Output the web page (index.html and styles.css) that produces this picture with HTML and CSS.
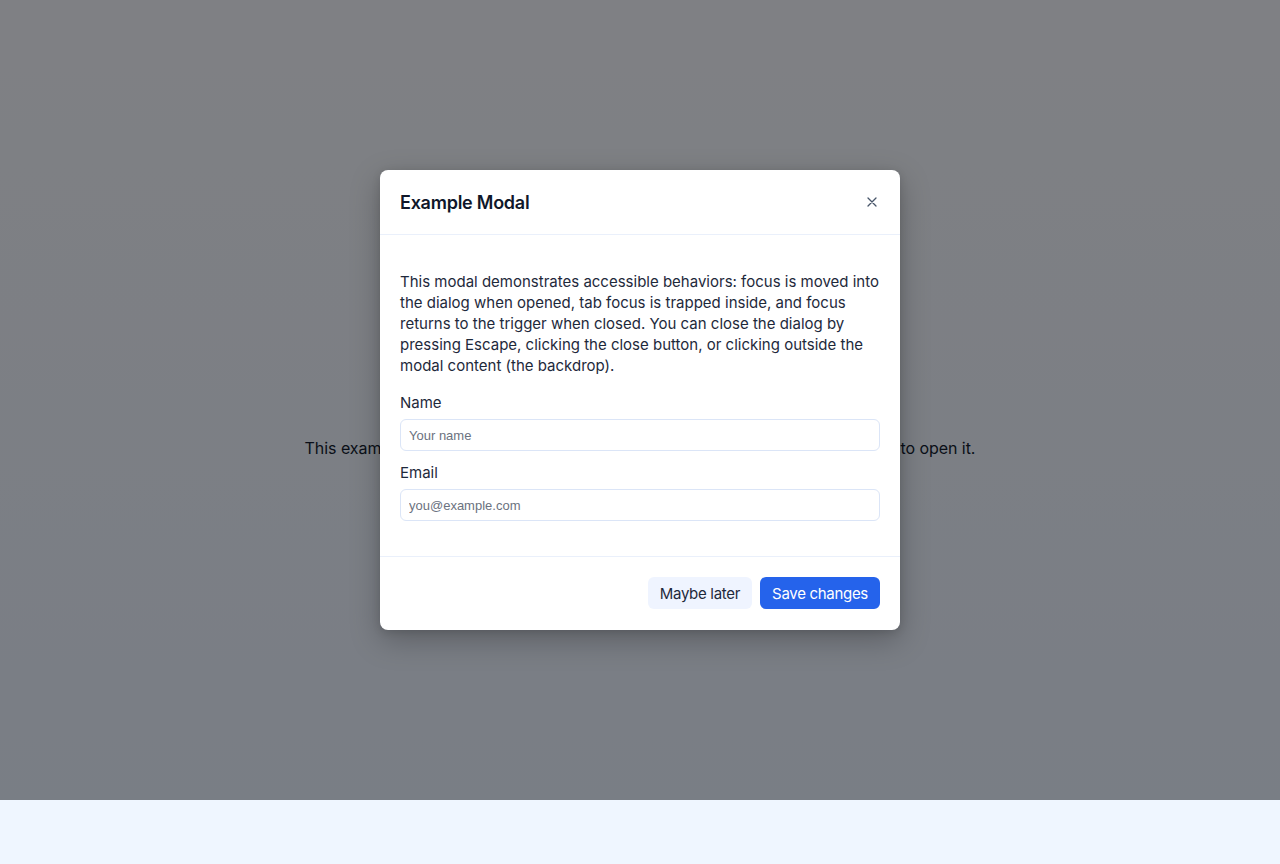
FILE: index.html
```html
<!DOCTYPE html>
<html lang="en">
<head>
<meta charset="utf-8">
<title>Accessible Modal</title>
<link rel="stylesheet" href="styles.css">
</head>
<body>
<main class="page">
  <p class="intro">This example demonstrates an accessible modal dialog. Click the button below to open it.</p>
</main>
<div class="backdrop">
  <div class="modal" role="dialog" aria-modal="true" aria-labelledby="modal-title">
    <header class="modal-header">
      <h2 id="modal-title" class="modal-title">Example Modal</h2>
      <button class="close-btn" aria-label="Close">
        <svg width="10" height="10" viewBox="0 0 10 10" aria-hidden="true"><path d="M1 1L9 9M9 1L1 9" stroke="#475569" stroke-width="1.3" stroke-linecap="round"/></svg>
      </button>
    </header>
    <div class="modal-body">
      <p class="modal-text">This modal demonstrates accessible behaviors: focus is moved into the dialog when opened, tab focus is trapped inside, and focus returns to the trigger when closed. You can close the dialog by pressing Escape, clicking the close button, or clicking outside the modal content (the backdrop).</p>
      <div class="field">
        <label class="label" for="name">Name</label>
        <input class="input" id="name" type="text" placeholder="Your name">
      </div>
      <div class="field last">
        <label class="label" for="email">Email</label>
        <input class="input" id="email" type="email" placeholder="you@example.com">
      </div>
    </div>
    <footer class="modal-footer">
      <button class="btn btn-secondary">Maybe later</button>
      <button class="btn btn-primary">Save changes</button>
    </footer>
  </div>
</div>
</body>
</html>
```

FILE: styles.css
```css
* { box-sizing: border-box; }
html, body { margin: 0; padding: 0; }
body {
  font-family: Inter, "Noto Sans", "Liberation Sans", sans-serif;
  background: #eff6ff;
  min-height: 864px;
}
.page {
  height: 800px;
  padding-top: 436px;
  background: linear-gradient(180deg, #fbfbfc 0%, #eff6ff 100%);
  display: flex;
  justify-content: center;
}
.intro {
  margin: 0;
  height: 24px;
  font-size: 16px;
  line-height: 24px;
  color: #111827;
  text-align: center;
  letter-spacing: -0.05px;
}
.backdrop {
  position: absolute;
  top: 0;
  left: 0;
  width: 100%;
  height: 800px;
  background: rgba(3, 6, 12, 0.5);
  display: flex;
  align-items: center;
  justify-content: center;
}
.modal {
  width: 520px;
  background: #ffffff;
  border-radius: 8px;
  box-shadow: 0 10px 30px rgba(0, 0, 0, 0.25), 0 2px 8px rgba(0, 0, 0, 0.12);
  color: #1e293b;
}
.modal-header {
  height: 65px;
  display: flex;
  align-items: center;
  justify-content: space-between;
  padding: 0 20px;
  border-bottom: 1px solid #eaf0fb;
}
.modal-title {
  margin: 0;
  font-size: 18px;
  font-weight: 600;
  color: #0f172a;
  letter-spacing: -0.25px;
}
.close-btn {
  width: 24px;
  height: 24px;
  margin-right: -4px;
  padding: 0;
  border: 0;
  background: transparent;
  display: flex;
  align-items: center;
  justify-content: center;
}
.modal-body {
  padding: 20px 20px 20px;
  border-bottom: 1px solid #eaf0fb;
}
.modal-text {
  margin: 16px 0;
  font-size: 15px;
  line-height: 21px;
  color: #1e293b;
}
.field { margin-bottom: 11px; }
.field.last { margin-bottom: 15px; }
.label {
  display: block;
  font-size: 15px;
  line-height: 21px;
  margin-bottom: 6px;
  color: #1e293b;
}
.input {
  display: block;
  width: 100%;
  height: 32px;
  padding: 0 8px;
  border: 1px solid #dbe5f7;
  border-radius: 6px;
  font-family: "Liberation Sans", Arial, sans-serif;
  font-size: 13px;
  color: #1e293b;
  background: #fff;
}
.input::placeholder { color: #6b7280; }
.modal-footer {
  display: flex;
  justify-content: flex-end;
  gap: 8px;
  padding: 20px 20px 21px;
}
.btn {
  height: 32px;
  padding: 0 12px;
  border: 0;
  border-radius: 6px;
  font-family: inherit;
  font-size: 15px;
  letter-spacing: -0.3px;
}
.btn-secondary { background: #eff4ff; color: #1e293b; }
.btn-primary { background: #2563eb; color: #ffffff; }
```
